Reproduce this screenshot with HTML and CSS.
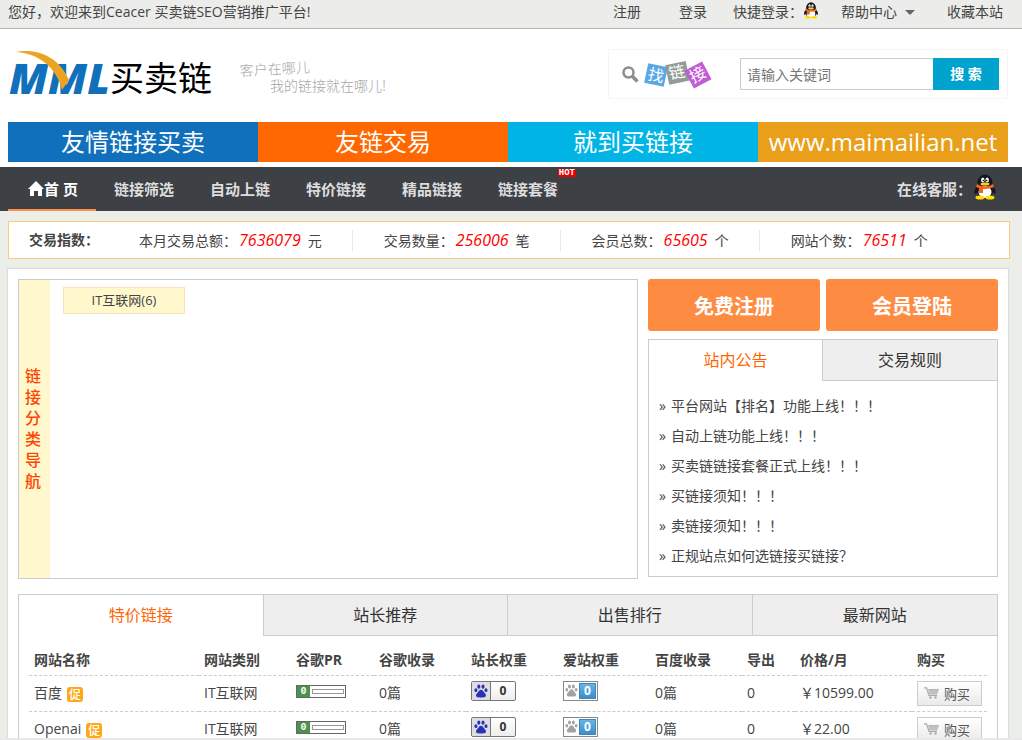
FILE: index.html
```html
<!DOCTYPE html>
<html lang="zh-CN">
<head>
<meta charset="utf-8">
<meta name="viewport" content="width=device-width, initial-scale=1">
<title>买卖链</title>
<link rel="stylesheet" href="styles.css">
</head>
<body>
<svg class="defs" aria-hidden="true">
  <symbol id="penguin" viewBox="0 0 22 26">
    <path d="M3 12C0 15 0 19 1 20l3-2zM19 12c3 3 3 7 2 8l-3-2z" fill="#15171c"/>
    <ellipse cx="11" cy="9" rx="7.500" ry="8.500" fill="#15171c"/>
    <ellipse cx="11" cy="17" rx="8" ry="7.500" fill="#15171c"/>
    <ellipse cx="11" cy="18" rx="6.500" ry="6" fill="#fff"/>
    <ellipse cx="8.800" cy="6" rx="1.700" ry="2.500" fill="#fff"/>
    <ellipse cx="13.200" cy="6" rx="1.700" ry="2.500" fill="#fff"/>
    <circle cx="9.300" cy="6.500" r=".8" fill="#111"/>
    <circle cx="12.700" cy="6.500" r=".8" fill="#111"/>
    <ellipse cx="11" cy="10" rx="4.500" ry="1.500" fill="#ffd21c"/>
    <path d="M3 10q8 5 16 0l1 3q-4 2-9 2l-2 0v4H5v-5l-3-1z" fill="#f0641e"/>
    <ellipse cx="6" cy="23.500" rx="4.500" ry="2" fill="#ffe000"/>
    <ellipse cx="16" cy="23.500" rx="4.500" ry="2" fill="#ffe000"/>
  </symbol>
  <symbol id="paw" viewBox="0 0 16 15">
    <ellipse cx="2.200" cy="6.500" rx="1.700" ry="2.100"/>
    <ellipse cx="5.500" cy="2.500" rx="1.800" ry="2.400"/>
    <ellipse cx="10.300" cy="2.500" rx="1.800" ry="2.400"/>
    <ellipse cx="13.700" cy="6.500" rx="1.700" ry="2.100"/>
    <path d="M8 6c2 0 2.500 2 4 3.500s2 2.500 1.500 4c-.5 1.500-3 1.300-5.500 1.300s-5 .2-5.500-1.300S2.500 11 4 9.500 6 6 8 6z"/>
  </symbol>
  <symbol id="cart" viewBox="0 0 15 12">
    <path d="M0 .8h2.500l2.500 7.700h8" fill="none" stroke="#aaa" stroke-width="1.200"/>
    <path d="M4 2h11l-2 5.500H5.500z" fill="#b5b5b5"/>
    <path d="M4.500 4h10M5 6h9" stroke="#ddd" stroke-width=".5"/>
    <circle cx="6.500" cy="10.500" r="1.200" fill="#aaa"/><circle cx="11.500" cy="10.500" r="1.200" fill="#aaa"/>
  </symbol>
</svg>

<div class="topbar">
  <p class="welcome">您好，欢迎来到Ceacer 买卖链SEO营销推广平台!</p>
  <div class="toplinks">
    <a href="#">注册</a>
    <a href="#">登录</a>
    <a class="quick" href="#">快捷登录：<svg class="qq-small"><use href="#penguin"/></svg></a>
    <a class="help" href="#">帮助中心<i class="caret"></i></a>
    <a class="fav" href="#">收藏本站</a>
  </div>
</div>

<header class="header">
  <svg class="logo" viewBox="0 0 400 60" role="img" aria-label="买卖链">
    <text class="logo-mml" x="1" y="48">MML</text>
    <path d="M7 6C30 2 51 11 61 34l-7 10C49 22 31 7 7 6z" fill="#eca321"/>
    <text class="logo-cn" x="102" y="45">买卖链</text>
    <text class="slogan" x="232" y="30" transform="rotate(-3 232 30)">客户在哪儿</text>
    <text class="slogan" x="262" y="45">我的链接就在哪儿!</text>
  </svg>
  <form class="search">
    <svg class="find" viewBox="0 0 92 32" aria-hidden="true">
      <circle cx="6.500" cy="14.500" r="5" fill="none" stroke="#8d8d8d" stroke-width="2.500"/>
      <path d="M10.500 18.500l5 5" stroke="#8d8d8d" stroke-width="3.500"/>
      <g transform="rotate(12 34 17)"><rect x="24" y="7" width="20" height="20" fill="#58a8e4"/><text class="tile" x="26" y="23">找</text></g>
      <g transform="rotate(-12 55 15)"><rect x="45" y="5" width="21" height="20" fill="#939b96"/><text class="tile" x="47" y="20">链</text></g>
      <g transform="rotate(-28 76 17)"><rect x="66" y="7" width="20" height="20" fill="#c25bd6"/><text class="tile" x="68" y="22">接</text></g>
    </svg>
    <input class="keyword" type="text" placeholder="请输入关键词" aria-label="请输入关键词">
    <button class="go" type="button">搜 索</button>
  </form>
</header>

<div class="banner">
  <a class="b1" href="#">友情链接买卖</a>
  <a class="b2" href="#">友链交易</a>
  <a class="b3" href="#">就到买链接</a>
  <a class="b4" href="#">www.maimailian.net</a>
</div>

<nav class="nav">
  <a class="home" href="#"><svg class="house" viewBox="0 0 16 16"><path d="M8 0l8 8h-2v7H10v-5H6v5H2V8H0z" fill="#fff"/></svg>首 页</a>
  <a href="#">链接筛选</a>
  <a href="#">自动上链</a>
  <a href="#">特价链接</a>
  <a href="#">精品链接</a>
  <a class="suite" href="#">链接套餐<span class="hot">HOT</span></a>
  <span class="service">在线客服：<svg class="qq-big"><use href="#penguin"/></svg></span>
</nav>

<div class="stats">
  <strong>交易指数：</strong>
  <span class="stat">本月交易总额：<em>7636079</em>元</span>
  <span class="stat">交易数量：<em>256006</em>笔</span>
  <span class="stat">会员总数：<em>65605</em>个</span>
  <span class="stat">网站个数：<em>76511</em>个</span>
</div>

<main class="main">
  <div class="upper">
    <section class="category">
      <h2 class="side-title">链<br>接<br>分<br>类<br>导<br>航</h2>
      <a class="cat" href="#">IT互联网(6)</a>
    </section>
    <aside class="side">
      <div class="actions">
        <button type="button">免费注册</button>
        <button type="button">会员登陆</button>
      </div>
      <div class="panel">
        <div class="tabs">
          <button class="tab on" type="button">站内公告</button>
          <button class="tab" type="button">交易规则</button>
        </div>
        <ul class="news">
          <li><a href="#">平台网站【排名】功能上线！！！</a></li>
          <li><a href="#">自动上链功能上线！！！</a></li>
          <li><a href="#">买卖链链接套餐正式上线！！！</a></li>
          <li><a href="#">买链接须知！！！</a></li>
          <li><a href="#">卖链接须知！！！</a></li>
          <li><a href="#">正规站点如何选链接买链接？</a></li>
        </ul>
      </div>
    </aside>
  </div>

  <section class="panel">
    <div class="tabs">
      <button class="tab on" type="button">特价链接</button>
      <button class="tab" type="button">站长推荐</button>
      <button class="tab" type="button">出售排行</button>
      <button class="tab" type="button">最新网站</button>
    </div>
    <div class="table-wrap">
      <table class="links">
        <colgroup><col class="w-name"><col class="w-std"><col class="w-pr"><col class="w-std"><col class="w-std"><col class="w-std"><col class="w-std"><col class="w-out"><col class="w-price"><col class="w-buy"></colgroup>
        <thead>
          <tr><th>网站名称</th><th>网站类别</th><th>谷歌PR</th><th>谷歌收录</th><th>站长权重</th><th>爱站权重</th><th>百度收录</th><th>导出</th><th>价格/月</th><th>购买</th></tr>
        </thead>
        <tbody>
          <tr>
            <td>百度<span class="promo">促</span></td><td>IT互联网</td>
            <td><span class="pr"><b>0</b><i></i></span></td><td>0篇</td>
            <td><span class="weight"><span class="paw-box"><svg><use href="#paw"/></svg></span><b>0</b></span></td>
            <td><span class="aizhan"><svg><use href="#paw"/></svg><b>0</b></span></td>
            <td>0篇</td><td>0</td><td>￥10599.00</td>
            <td><button class="buy" type="button"><svg><use href="#cart"/></svg>购买</button></td>
          </tr>
          <tr>
            <td>Openai<span class="promo">促</span></td><td>IT互联网</td>
            <td><span class="pr"><b>0</b><i></i></span></td><td>0篇</td>
            <td><span class="weight"><span class="paw-box"><svg><use href="#paw"/></svg></span><b>0</b></span></td>
            <td><span class="aizhan"><svg><use href="#paw"/></svg><b>0</b></span></td>
            <td>0篇</td><td>0</td><td>￥22.00</td>
            <td><button class="buy" type="button"><svg><use href="#cart"/></svg>购买</button></td>
          </tr>
        </tbody>
      </table>
    </div>
  </section>
</main>
</body>
</html>
```

FILE: styles.css
```css
* {
  box-sizing: border-box;
}

html {
  height: 100%;
  overflow: hidden;
}

body {
  height: 100%;
  margin: 0;
  overflow: hidden;
  border-bottom: 2px solid #e8e8e8;
  background: #eceeea;
  color: #444;
  font: 14px/20px "Open Sans", "Noto Sans CJK SC", sans-serif;
}

a {
  color: inherit;
  text-decoration: none;
}

button,
input {
  font-family: inherit;
}

.defs {
  display: none;
}

.topbar {
  display: flex;
  justify-content: space-between;
  height: 29px;
  padding: 2px 19px 0 8px;
  border-bottom: 1px solid #b4b4b4;
  background: #ececea;
}

.welcome {
  margin: 0;
}

.toplinks {
  display: flex;
  align-items: flex-start;
}

.toplinks a {
  margin-left: 38px;
}

.toplinks .quick {
  display: flex;
  margin-left: 26px;
}

.qq-small {
  width: 16px;
  height: 17px;
}

.toplinks .help {
  display: flex;
  align-items: center;
  gap: 8px;
  margin-left: 22px;
}

.toplinks .fav {
  margin-left: 32px;
}

.caret {
  border: 5px solid transparent;
  border-top-color: #666;
  border-bottom: 0;
}

.header {
  display: flex;
  justify-content: space-between;
  align-items: flex-start;
  height: 93px;
  padding: 20px 14px 0 8px;
  background: #fff;
}

.logo {
  width: 400px;
  height: 60px;
  margin-top: -3px;
}

.logo-mml {
  fill: #1070bb;
  font: italic 800 43px "Open Sans", sans-serif;
}

.logo-cn {
  fill: #000;
  font: 34px "Noto Sans CJK SC", sans-serif;
}

.slogan {
  fill: #a5a5a5;
  font: 300 14px "Noto Sans CJK SC", sans-serif;
}

.search {
  display: flex;
  align-items: center;
  width: 400px;
  height: 50px;
  padding: 0 8px 0 13px;
  border: 1px solid #f5f5f5;
}

.find {
  width: 92px;
  height: 32px;
}

.tile {
  fill: #fff;
  font: 16px "Noto Sans CJK SC", sans-serif;
}

.keyword {
  flex: 1;
  min-width: 0;
  height: 32px;
  margin-left: 26px;
  padding: 0 6px;
  border: 1px solid #ccc;
  border-right: 0;
  background: #fff;
  font-size: 14px;
}

.keyword::placeholder {
  color: #757575;
}

.go {
  width: 66px;
  height: 32px;
  padding: 0 0 2px;
  border: 0;
  background: #00a2ce;
  color: #fff;
  font-size: 14px;
  font-weight: 700;
}

.banner {
  display: grid;
  grid-template-columns: repeat(4, 1fr);
  padding: 0 14px 5px 8px;
  background: #fff;
  color: #fff;
  font-size: 24px;
  line-height: 40px;
  text-align: center;
}

.b1 {
  background: #1070bb;
}

.b2 {
  background: #ff6700;
}

.b3 {
  background: #00b5e6;
}

.b4 {
  background: #e99f19;
}

.nav {
  display: flex;
  height: 44px;
  padding: 0 26px 0 8px;
  background: #3d4045;
  color: #ddd;
  font-size: 15px;
  font-weight: 700;
  line-height: 44px;
}

.nav a {
  padding: 0 18px;
}

.nav .home {
  display: flex;
  align-items: center;
  padding-left: 20px;
  box-shadow: inset 0 -2px #ff8d42;
  color: #fff;
}

.house {
  width: 16px;
  height: 16px;
}

.suite {
  position: relative;
}

.hot {
  position: absolute;
  top: 2px;
  right: 0;
  padding: 0 1px;
  background: #e60000;
  color: #fff;
  font: 700 9px/8px "Liberation Mono", monospace;
}

.service {
  display: flex;
  align-items: center;
  margin-left: auto;
}

.qq-big {
  width: 22px;
  height: 26px;
  margin: 0 0 4px 2px;
}

.stats {
  display: flex;
  align-items: center;
  height: 38px;
  margin: 10px 12px 0 8px;
  padding-left: 20px;
  border: 1px solid #ffc979;
  background: #fff;
}

.stats strong {
  width: 79px;
}

.stat {
  padding: 0 30px 0 31px;
  border-right: 1px solid #e8e8e8;
}

.stat:last-child {
  border-right: 0;
}

.stat em {
  margin: 0 7px 0 2px;
  color: #f00;
  font-size: 16px;
}

.main {
  margin: 10px 14px 0 8px;
  padding: 10px;
  background: #fff;
  box-shadow: 0 0 1px 1px #ddd;
}

.upper {
  display: flex;
  align-items: flex-start;
  gap: 10px;
  margin-bottom: 15px;
}

.category {
  display: flex;
  flex: 1;
  align-items: flex-start;
  height: 300px;
  border: 1px solid #ccc;
}

.side-title {
  display: flex;
  align-items: center;
  align-self: stretch;
  width: 31px;
  margin: 0;
  padding-left: 6px;
  background: #fff8cc;
  color: #ff4500;
  font-size: 16px;
  font-weight: 500;
  line-height: 21px;
}

.cat {
  width: 122px;
  margin: 7px 13px;
  border: 1px solid #fde0c0;
  background: #fff8cc;
  font-size: 13px;
  line-height: 25px;
  text-align: center;
}

.side {
  width: 350px;
}

.actions {
  display: flex;
  gap: 6px;
  margin-bottom: 8px;
}

.actions button {
  flex: 1;
  height: 52px;
  padding: 0;
  border: 0;
  border-radius: 3px;
  background: #fd8c42;
  color: #fff;
  font-size: 20px;
  font-weight: 700;
}

.panel {
  border: 1px solid #ccc;
}

.tabs {
  display: flex;
}

.tab {
  flex: 1;
  height: 41px;
  padding: 0 0 2px;
  border: 0;
  border-bottom: 1px solid #ccc;
  border-left: 1px solid #ccc;
  background: #eee;
  color: #333;
  font-size: 16px;
}

.tab:last-child {
  flex-basis: 2px;
}

.tab.on {
  border-color: transparent;
  border-left: 0;
  background: #fff;
  color: #ff6600;
}

.news {
  margin: 0;
  padding: 10px 10px 5px;
  list-style: none;
  line-height: 30px;
}

.news li::before {
  content: "»";
  margin-right: 5px;
}

.table-wrap {
  padding: 10px 10px 0;
}

.links {
  width: 100%;
  border-collapse: collapse;
  table-layout: fixed;
  text-align: left;
}

.w-name {
  width: 170px;
}

.w-std {
  width: 92px;
}

.w-pr {
  width: 83px;
}

.w-out {
  width: 53px;
}

.w-price {
  width: 117px;
}

.w-buy {
  width: 75px;
}

.links th,
.links td {
  height: 36px;
  padding: 0 5px;
  border-bottom: 1px dashed #ccc;
  white-space: nowrap;
}

.links th {
  height: 29px;
}

.links td > span,
.links td > button {
  vertical-align: middle;
}

.promo {
  display: inline-block;
  width: 16px;
  height: 15px;
  margin-left: 5px;
  border-radius: 3px;
  background: #ffa715;
  color: #fff;
  font-size: 12px;
  font-weight: 500;
  line-height: 15px;
  text-align: center;
}

.pr {
  display: flex;
  align-items: center;
  width: 50px;
  height: 13px;
  margin-bottom: 3px;
  border: 1px solid #666;
}

.pr b {
  width: 13px;
  background: #4c924c;
  color: #fff;
  font: 700 10px/11px "Liberation Mono", monospace;
  text-align: center;
}

.pr i {
  flex: 1;
  height: 5px;
  margin: 0 1px 0 2px;
  border: 1px solid #999;
}

.weight {
  display: flex;
  width: 45px;
  height: 20px;
  margin-bottom: 5px;
  border: 1px solid #777;
  border-radius: 2px;
  background: linear-gradient(#fff, #eee);
}

.paw-box {
  display: flex;
  padding: 2px;
  border-right: 1px solid #777;
  background: #dedee2;
}

.weight svg {
  width: 14px;
  height: 14px;
  fill: #2932b4;
}

.weight b {
  flex: 1;
  color: #333;
  font-size: 12px;
  line-height: 18px;
  text-align: center;
}

.aizhan {
  display: flex;
  align-items: center;
  justify-content: space-between;
  width: 35px;
  height: 20px;
  margin-bottom: 5px;
  padding: 0 1px;
  border: 1px solid #888;
  background: #fff;
}

.aizhan svg {
  width: 13px;
  height: 13px;
  fill: #a2a2a2;
}

.aizhan b {
  width: 17px;
  border: 1px solid #3d87bd;
  background: linear-gradient(#66b5e8, #3e8cc8);
  color: #fff;
  font-size: 12px;
  line-height: 14px;
  text-align: center;
}

.buy {
  display: flex;
  align-items: center;
  gap: 5px;
  width: 65px;
  height: 25px;
  padding: 0 6px;
  border: 1px solid #ccc;
  background: linear-gradient(#fff, #eaeaea);
  color: #555;
  font-size: 13px;
}

.buy svg {
  width: 15px;
  height: 12px;
}
```
